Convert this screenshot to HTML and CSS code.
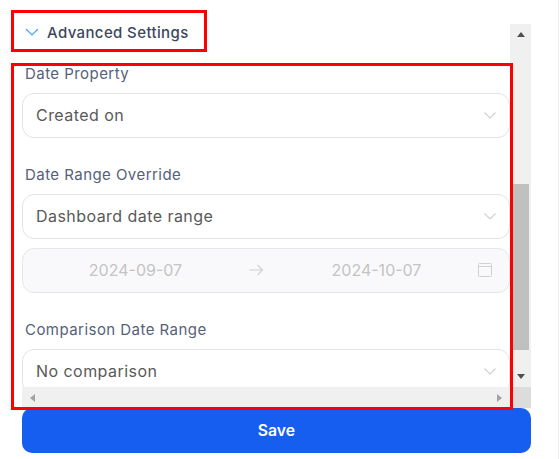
FILE: index.html
```html
<!DOCTYPE html>
<html lang="en">
<head>
  <meta charset="UTF-8"/>
  <title>Advanced Settings</title>
  <link rel="stylesheet" href="styles.css">
</head>
<body>
<div class="wrap">
  <div class="scroll_box">
    <div class="content">
      <div class="section_head">
        <svg class="head_icon" width="14" height="14" viewBox="0 0 14 14"><path d="M1 4l6 6 6-6" fill="none" stroke="#40a9ff" stroke-width="1.2"/></svg>
        <span>Advanced Settings</span>
      </div>
      <div class="field field_first">
        <label>Date Property</label>
        <div class="select">
          <span>Created on</span>
          <svg width="12" height="12" viewBox="0 0 12 12"><path d="M.5 3.5l5.5 5.5 5.5-5.5" fill="none" stroke="#d0d0d0" stroke-width="1.1"/></svg>
        </div>
      </div>
      <div class="field">
        <label>Date Range Override</label>
        <div class="select">
          <span>Dashboard date range</span>
          <svg width="12" height="12" viewBox="0 0 12 12"><path d="M.5 3.5l5.5 5.5 5.5-5.5" fill="none" stroke="#d0d0d0" stroke-width="1.1"/></svg>
        </div>
        <div class="range">
          <span class="range_date">2024-09-07</span>
          <svg class="range_arrow" width="16" height="14" viewBox="0 0 16 14"><path d="M1.5 7h13M9.5 2l5 5-5 5" fill="none" stroke="#d0d0d0" stroke-width="1.1"/></svg>
          <span class="range_date">2024-10-07</span>
          <svg class="range_cal" width="14" height="14" viewBox="0 0 14 14"><path d="M.5 1.5a1 1 0 0 1 1-1h11a1 1 0 0 1 1 1v11a1 1 0 0 1-1 1h-11a1 1 0 0 1-1-1zM.5 3.5h13" fill="none" stroke="#d0d0d0"/></svg>
        </div>
      </div>
      <div class="field">
        <label>Comparison Date Range</label>
        <div class="select">
          <span>No comparison</span>
          <svg width="12" height="12" viewBox="0 0 12 12"><path d="M.5 3.5l5.5 5.5 5.5-5.5" fill="none" stroke="#d0d0d0" stroke-width="1.1"/></svg>
        </div>
      </div>
    </div>
    <div class="bar_v">
      <div class="arrow arrow_up"></div>
      <div class="track_v"><div class="thumb_v"></div></div>
      <div class="arrow arrow_down"></div>
    </div>
    <div class="bar_h">
      <div class="arrow arrow_left"></div>
      <div class="arrow arrow_right"></div>
    </div>
    <div class="corner"></div>
  </div>
  <button class="save_btn">Save</button>

  <div class="mark mark_head"></div>
  <div class="mark mark_fields"></div>
</div>
</body>
</html>
```

FILE: styles.css
```css
* {
    box-sizing: border-box;
}

body {
    margin: 0;
    background-color: #fff;
    font-family: Inter, "Liberation Sans", sans-serif;
}

.wrap {
    position: relative;
    width: 559px;
    height: 459px;
    padding: 24px 0 0 22px;
    border-right: 1px solid #eeeeee;
    overflow: hidden;
}

.scroll_box {
    display: grid;
    grid-template-columns: 488px 21px;
    grid-template-rows: 363px 21px;
    width: 509px;
}

.content {
    overflow: hidden;
}

.section_head {
    display: flex;
    align-items: center;
    gap: 8px;
    height: 16px;
    margin-left: 3px;
    color: #3d4760;
    font-size: 15px;
    font-weight: 500;
    letter-spacing: 0.38px;
}

.field_first {
    margin-top: 22px;
}

.field {
    padding-bottom: 25px;
}

.field label {
    display: block;
    height: 24px;
    margin: 0 0 7px 3px;
    color: #55617a;
    font-size: 15px;
    line-height: 24px;
    letter-spacing: 0.45px;
}

.select {
    display: flex;
    align-items: center;
    justify-content: space-between;
    height: 45px;
    padding: 0 13px 2px;
    border: 1px solid #e3e3e6;
    border-radius: 12px;
    color: #595959;
    font-size: 16px;
    letter-spacing: 0.45px;
}

.range {
    display: flex;
    align-items: center;
    height: 45px;
    margin-top: 9px;
    padding-bottom: 2px;
    border: 1px solid #e6e6ea;
    border-radius: 12px;
    background-color: #f9f9fb;
    color: #c4c4c4;
    font-size: 16px;
}

.range_date {
    flex: none;
    width: 225px;
    text-align: center;
}

.range_cal {
    margin-left: -11px;
}

.bar_v {
    display: flex;
    flex-direction: column;
    background-color: #f0f0f0;
}

.track_v {
    flex: 1;
    padding: 143px 2px 21px 3px;
}

.thumb_v {
    height: 166px;
    background-color: #c0c0c0;
}

.bar_h {
    display: flex;
    align-items: center;
    justify-content: space-between;
    padding: 0 8px;
    background-color: #f0f0f0;
}

.corner {
    background-color: #dcdcdc;
}

.arrow {
    flex: none;
    width: 0;
    height: 0;
    border-style: solid;
    border-color: transparent;
}

.arrow_up {
    margin: 8px auto 4px;
    border-width: 0 4.5px 5px;
    border-bottom-color: #505050;
}

.arrow_down {
    margin: 0 auto 8px;
    border-width: 5px 4.5px 0;
    border-top-color: #505050;
}

.arrow_left {
    border-width: 4.5px 5px 4.5px 0;
    border-right-color: #a3a3a3;
}

.arrow_right {
    border-width: 4.5px 0 4.5px 5px;
    border-left-color: #a3a3a3;
}

.save_btn {
    display: block;
    width: 509px;
    height: 45px;
    border: 0;
    border-radius: 10px;
    background-color: #155eef;
    color: #fff;
    font-family: inherit;
    font-size: 15.75px;
    font-weight: 600;
}

.mark {
    position: absolute;
    border: 3px solid #ff0000;
}

.mark_head {
    left: 11px;
    top: 10px;
    width: 196px;
    height: 42px;
}

.mark_fields {
    left: 11px;
    top: 63px;
    width: 502px;
    height: 347px;
}
```
